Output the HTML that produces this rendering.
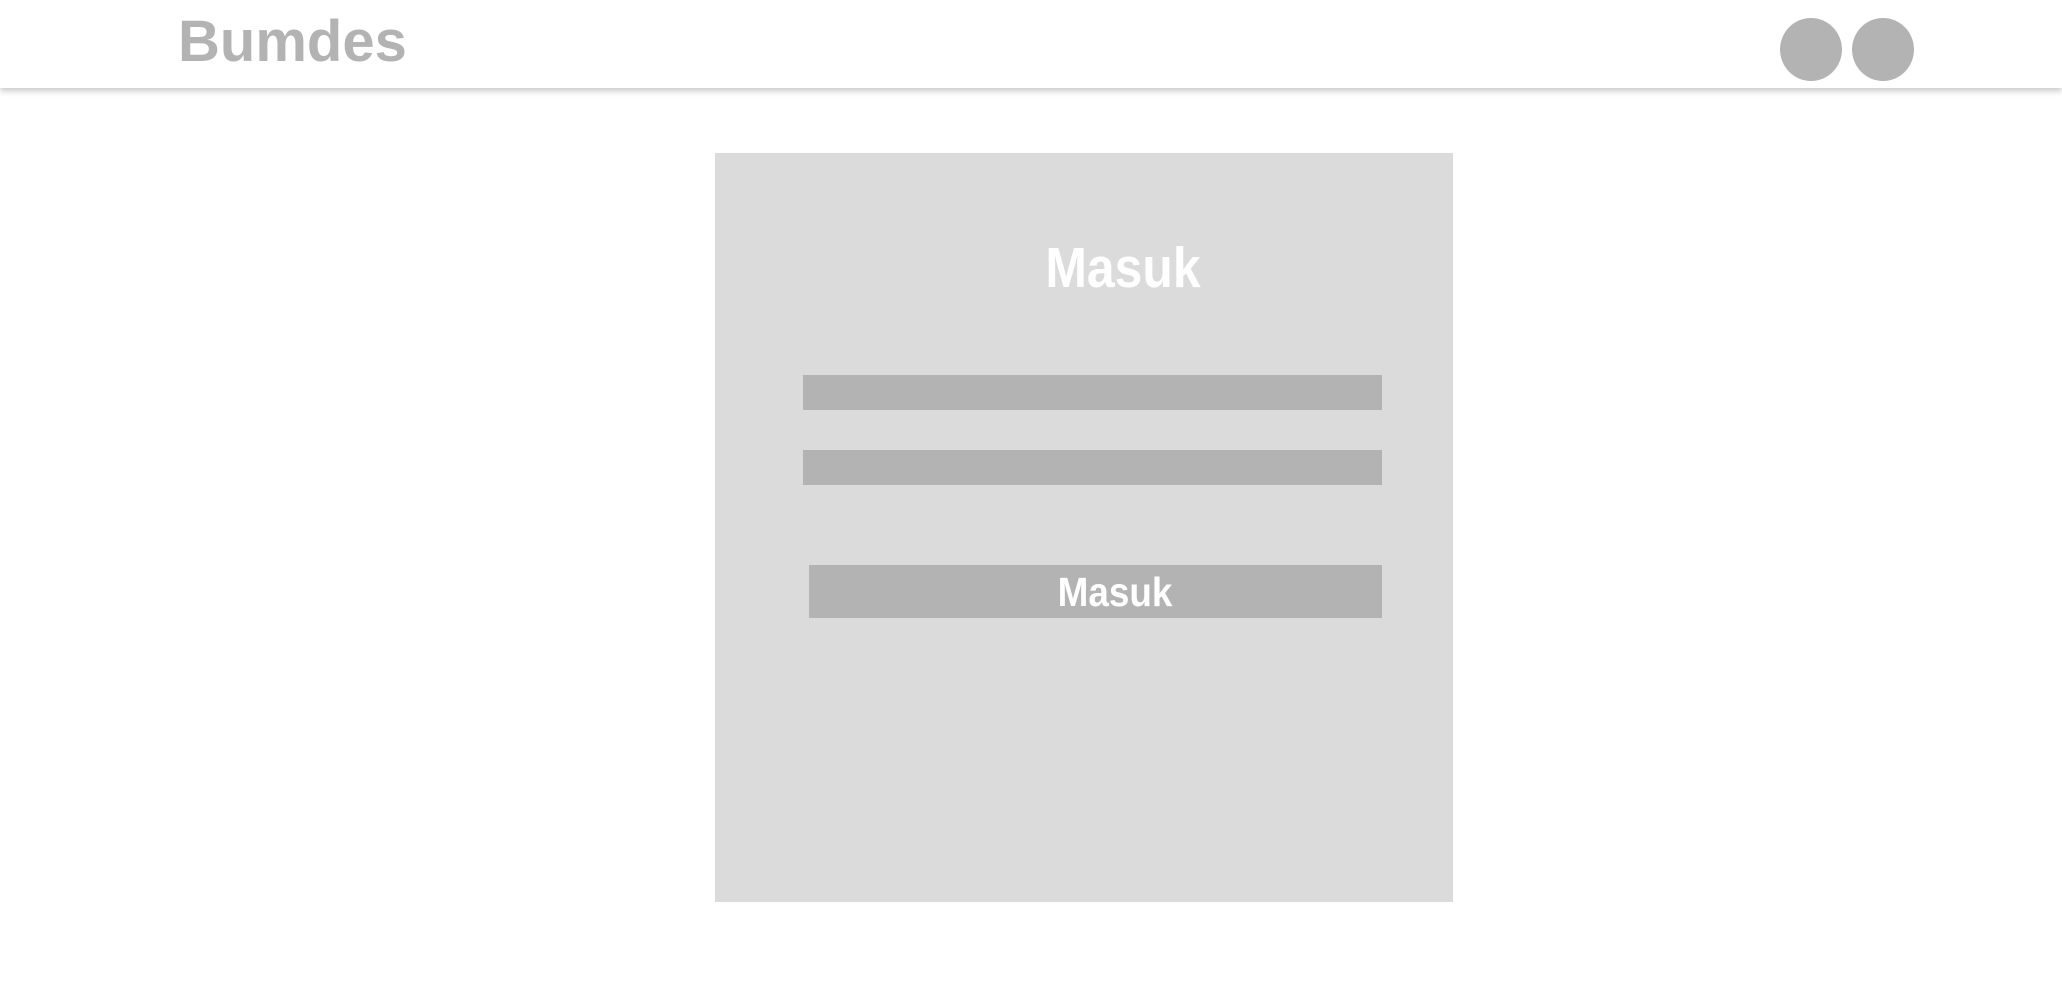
<!DOCTYPE html>
<html><head><style>
html,body{margin:0;padding:0;width:2062px;height:990px;background:#fff;overflow:hidden;font-family:"Liberation Sans",Arial,sans-serif;}
.hdr{position:absolute;left:0;top:0;width:2062px;height:88px;background:#fff;box-shadow:0 3px 6px rgba(0,0,0,0.22);}
.logo{position:absolute;left:178px;top:7px;font-size:58px;font-weight:bold;color:#b3b3b3;line-height:70px;}
.c{position:absolute;top:18px;width:62px;height:63px;border-radius:50%;background:#b3b3b3;}
.card{position:absolute;left:715px;top:153px;width:738px;height:749px;background:#dbdbdb;}
.t{position:absolute;color:#fff;font-weight:bold;white-space:nowrap;}
.in{position:absolute;background:#b3b3b3;}
</style></head><body>
<div class="hdr">
<div class="logo">Bumdes</div>
<div class="c" style="left:1780px"></div>
<div class="c" style="left:1852px"></div>
</div>
<div class="card">
<div class="t" style="top:82px;left:408px;font-size:57px;line-height:66px;transform:translateX(-50%) scaleX(0.875);">Masuk</div>
<div class="in" style="left:88px;top:222px;width:579px;height:35px"></div>
<div class="in" style="left:88px;top:297px;width:579px;height:35px"></div>
<div class="in" style="left:94px;top:412px;width:573px;height:53px">
<div class="t" style="top:3px;left:306px;font-size:41px;line-height:48px;transform:translateX(-50%) scaleX(0.9);">Masuk</div>
</div>
</div>
</body></html>
